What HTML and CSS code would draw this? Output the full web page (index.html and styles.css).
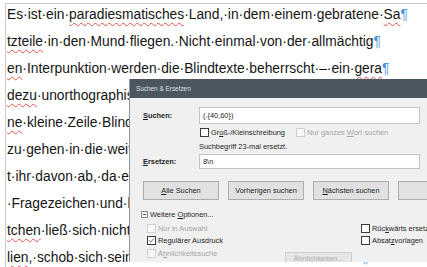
FILE: index.html
```html
<!DOCTYPE html>
<html lang="de">
<head>
  <meta charset="UTF-8">
  <title>Suchen &amp; Ersetzen</title>
  <link rel="stylesheet" href="styles.css">
</head>
<body>
  <div class="doc">
    <div class="text">
      <div class="line">Es·ist·ein·<span class="err">paradiesmatisches</span>·Land,·in·dem·einem·gebratene·<span class="err">Sa</span><span class="pm">¶</span></div>
      <div class="line"><span class="err">tzteile</span>·in·den·Mund·fliegen.·Nicht·einmal·von·der·allmächtig<span class="pm">¶</span></div>
      <div class="line"><span class="err">en</span>·Interpunktion·werden·die·Blindtexte·beherrscht·–·ein·<span class="err">gera</span><span class="pm">¶</span></div>
      <div class="line"><span class="err">dezu</span>·unorthographisches·Leben.·Eines·Tages·aber·beschloß·ei<span class="pm">¶</span></div>
      <div class="line"><span class="err">ne</span>·kleine·Zeile·Blindtext,·ihr·Name·war·Lorem·Ipsum,·hinaus·<span class="pm">¶</span></div>
      <div class="line">zu·gehen·in·die·weite·Grammatik.·Der·große·Oxmox·rie<span class="pm">¶</span></div>
      <div class="line">t·ihr·davon·ab,·da·es·dort·wimmele·von·bösen·Kommata,·wilden<span class="pm">¶</span></div>
      <div class="line">·Fragezeichen·und·hinterhältigen·Semikoli,·doch·das·Blindtex<span class="pm">¶</span></div>
      <div class="line"><span class="err">tchen</span>·ließ·sich·nicht·beirren.·Es·packte·seine·sieben·Versa<span class="pm">¶</span></div>
      <div class="line"><span class="err">lien</span>,·schob·sich·sein·Initial·in·den·Gürtel·und·machte·sich<span class="pm">¶</span></div>
    </div>
  </div>

  <div class="dialog">
    <div class="titlebar">Suchen &amp; Ersetzen</div>
    <div class="dlg-body">
      <div class="field">
        <div class="lbl"><u>S</u>uchen:</div>
        <div class="input big">(.{40,60})</div>
      </div>

      <div class="checks">
        <div class="chk first"><span class="box"></span><span>Gr<u>o</u>ß-/Kleinschreibung</span></div>
        <div class="chk off"><span class="box"></span><span>Nur ganzes <u>W</u>ort suchen</span></div>
      </div>

      <div class="status">Suchbegriff 23-mal ersetzt.</div>

      <div class="field second">
        <div class="lbl"><u>E</u>rsetzen:</div>
        <div class="input">8\n</div>
      </div>

      <div class="buttons">
        <div class="btn"><u>A</u>lle Suchen</div>
        <div class="btn">Vorherigen suchen</div>
        <div class="btn"><u>N</u>ächsten suchen</div>
        <div class="btn wide">Alle ersetzen</div>
      </div>

      <div class="more">
        <svg class="tog" viewBox="0 0 7 7"><rect x="0.5" y="0.5" width="6" height="6" fill="#fff" stroke="#8a8a8a"/><path d="M2 3.5 H5" stroke="#555"/></svg>
        <span>Weitere <u>O</u>ptionen...</span>
      </div>

      <div class="options">
        <div class="chk off"><span class="box"></span><span>Nur in Auswahl</span></div>
        <div></div>
        <div class="chk"><span class="box"></span><span>Rüc<u>k</u>wärts ersetzen</span></div>

        <div class="chk"><span class="box"><svg viewBox="0 0 9 9"><path d="M1.6 4.4 L3.6 6.4 L7.4 2.2" fill="none" stroke="#222" stroke-width="0.9"/></svg></span><span>Regulärer Ausdruck</span></div>
        <div></div>
        <div class="chk"><span class="box"></span><span>Absat<u>z</u>vorlagen</span></div>

        <div class="chk off"><span class="box"></span><span>Ä<u>h</u>nlichkeitssuche</span></div>
        <div class="btn off small">Ähnlichkeiten...</div>
        <div></div>
      </div>
    </div>
  </div>
</body>
</html>
```

FILE: styles.css
```css
* { box-sizing: border-box; }
body { margin: 0; width: 427px; height: 267px; overflow: hidden; position: relative; background: #fff; font-family: "Liberation Sans", Arial, sans-serif; }

/* document */
.doc { margin: 3px 0 0 5px; height: 264px; border-top: 1px solid #c9c9c9; border-left: 1px solid #c9c9c9; }
.text { margin-top: -3px; padding-left: 1px; font-size: 13.8px; line-height: 27px; color: #151515; }
.line { white-space: pre; }
.err { text-decoration: underline wavy #e0534f; text-decoration-thickness: 1px; text-underline-offset: 3px; }
.pm { color: #4f93d6; }

/* dialog */
.dialog { position: absolute; left: 129px; top: 79px; width: 298px; height: 183px; overflow: hidden; background: #f0f0f0; border-left: 1px solid #8d969f; font-size: 7.4px; color: #1e1e1e; }
.titlebar { height: 19px; line-height: 19px; padding-left: 6px; background: #4b5661; color: #dde2e7; font-size: 6.4px; }
.dlg-body { padding-top: 9px; }
u { text-decoration-thickness: 0.6px; text-underline-offset: 1px; }

.field { display: flex; align-items: center; padding-left: 13px; }
.field.second { margin-top: 2px; }
.lbl { width: 56px; font-weight: bold; }
.input { width: 221px; height: 15px; line-height: 13px; padding-left: 3px; background: #fff; border: 1px solid #c3c3c3; }
.input.big { height: 17px; line-height: 15px; }

.checks { display: flex; align-items: center; height: 10px; margin-top: 3px; padding-left: 70px; }
.chk { display: flex; align-items: center; gap: 2px; white-space: nowrap; }
.chk.first { width: 96px; }
.box { display: flex; flex: none; width: 9px; height: 9px; background: #fff; border: 1px solid #3a3a3a; }
.box svg { width: 7px; height: 7px; }
.off { color: #a5a5a5; }
.off .box { border-color: #d0d0d0; background: #f7f7f7; }

.status { height: 10px; line-height: 10px; margin-top: 5px; padding-left: 69px; }

.buttons { display: flex; gap: 9px; margin-top: 12px; padding-left: 13px; }
.btn { flex: none; width: 76px; height: 19px; line-height: 17px; text-align: center; white-space: nowrap; background: #e1e1e1; border: 1px solid #adadad; }
.btn.wide { width: 110px; }
.btn.off { color: #adadad; background: #e6e6e6; border-color: #cdcdcd; }
.btn.small { width: 67px; height: 14px; line-height: 12px; margin-top: 5px; }

.more { display: flex; align-items: center; gap: 2px; height: 10px; margin-top: 9px; padding-left: 11px; }
.tog { width: 7px; height: 7px; }

.options { display: grid; grid-template-columns: 138px 76px 80px; grid-auto-rows: 12.5px; align-items: center; margin-top: 3px; padding-left: 17px; }
.options .chk { overflow: hidden; }
.options .btn.small { align-self: start; }
```
